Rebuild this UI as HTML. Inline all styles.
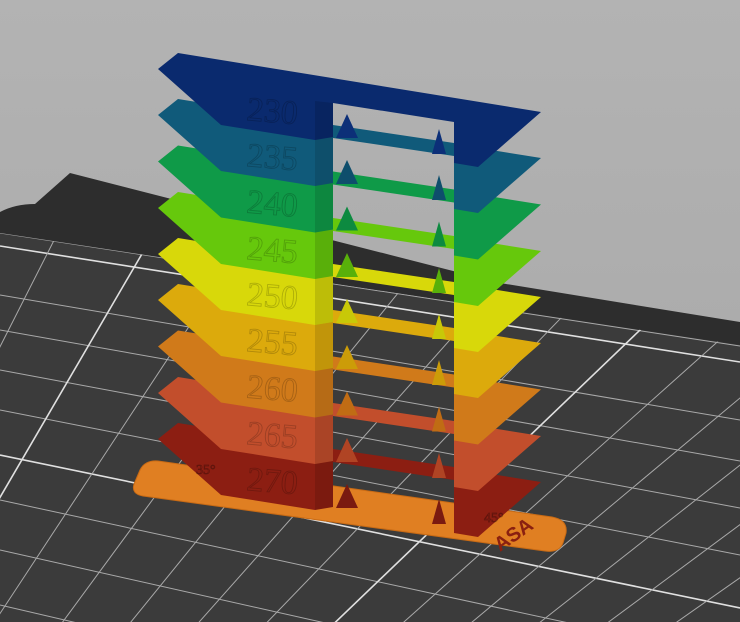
<!DOCTYPE html>
<html><head><meta charset="utf-8"><style>
html,body{margin:0;padding:0;width:740px;height:622px;overflow:hidden;background:#ababab}
svg{display:block;overflow:hidden}
.n{font-family:"Liberation Serif",serif;font-size:34px;fill:none;stroke:rgba(0,0,0,.2);stroke-width:.9}
</style></head><body>
<svg width="740" height="622" viewBox="0 0 740 622" xmlns="http://www.w3.org/2000/svg">
<defs>
<linearGradient id="bg" x1="0" y1="0" x2="0" y2="1"><stop offset="0" stop-color="#b3b3b3"/><stop offset="1" stop-color="#a6a6a6"/></linearGradient>
<clipPath id="gc"><polygon points="0,233 740,345 740,622 0,622"/></clipPath>
<clipPath id="all"><rect width="740" height="622"/></clipPath>
</defs>
<g clip-path="url(#all)">
<rect width="740" height="622" fill="url(#bg)"/>
<path d="M0,212 Q15,204 35,204 L70,173 L500,283 L740,322 L740,622 L0,622 Z" fill="#2d2d2d"/>
<polygon points="0,233 740,345 740,622 0,622" fill="#3b3b3b"/>
<g clip-path="url(#gc)" stroke="#a9a9a9" stroke-width="1" fill="none">
<line x1="0" y1="233" x2="740" y2="346"/>
<line x1="0" y1="246" x2="740" y2="362" stroke="#e0e0e0" stroke-width="1.6"/>
<line x1="0" y1="295" x2="740" y2="420"/>
<line x1="0" y1="330" x2="740" y2="461"/>
<line x1="0" y1="370" x2="740" y2="508"/>
<line x1="0" y1="410" x2="740" y2="555"/>
<line x1="0" y1="455" x2="740" y2="608" stroke="#e0e0e0" stroke-width="1.6"/>
<line x1="0" y1="500" x2="740" y2="660"/>
<line x1="0" y1="550" x2="740" y2="716"/>
<line x1="0" y1="605" x2="740" y2="777"/>
<line x1="-591" y1="1511" x2="67" y2="0"/>
<line x1="-591" y1="1511" x2="176" y2="0"/>
<line x1="-591" y1="1511" x2="290" y2="0" stroke="#e0e0e0" stroke-width="1.6"/>
<line x1="-591" y1="1511" x2="404" y2="0"/>
<line x1="-591" y1="1511" x2="520" y2="0"/>
<line x1="-591" y1="1511" x2="636" y2="0"/>
<line x1="-591" y1="1511" x2="752" y2="0"/>
<line x1="-591" y1="1511" x2="868" y2="0"/>
<line x1="-591" y1="1511" x2="984" y2="0" stroke="#e0e0e0" stroke-width="1.6"/>
<line x1="-591" y1="1511" x2="1100" y2="0"/>
<line x1="-591" y1="1511" x2="1216" y2="0"/>
<line x1="-591" y1="1511" x2="1332" y2="0"/>
<line x1="-591" y1="1511" x2="1448" y2="0"/>
<line x1="-591" y1="1511" x2="1564" y2="0"/>
<line x1="-591" y1="1511" x2="1680" y2="0" stroke="#e0e0e0" stroke-width="1.6"/>
<line x1="-591" y1="1511" x2="1796" y2="0"/>
</g>
<path d="M158,461 L552,517 Q568,520 566,533 L563,543 Q559,553 545,551 L143,496 Q131,494 134,484 L140,470 Q145,460 158,461 Z" fill="#e07f22" stroke="#c86a14" stroke-width="1"/>
<text x="0" y="0" transform="translate(500,552) rotate(-35)" font-family="Liberation Sans,sans-serif" font-weight="bold" font-size="20" fill="#8a2010">ASA</text>

<g transform="translate(0,370)" fill="#8c1e12">
<polygon points="333,79 454,97 454,110 333,92"/>
<polygon points="158,69 178,53 333,78 333,137 315,140 221,125"/>
<polygon points="315,76 333,78 333,137 315,140" fill="#000" opacity=".12"/>
<polygon points="454,98 541,112 478,167 454,163"/>
<text class="n" x="247" y="122" transform="rotate(5 270 110)">270</text>
<text x="196" y="104" font-family="Liberation Serif,serif" font-size="14" fill="none" stroke="rgba(0,0,0,.3)" stroke-width=".7">35°</text>
<text x="484" y="152" font-family="Liberation Serif,serif" font-size="14" fill="none" stroke="rgba(0,0,0,.3)" stroke-width=".7">45°</text>
<polygon points="347,114 336,138 358,138" fill="#7a1a10"/>
<polygon points="439,129 432,154 446,154" fill="#7a1a10"/>
</g>
<g transform="translate(0,324)" fill="#c24e2c">
<polygon points="333,79 454,97 454,110 333,92"/>
<polygon points="158,69 178,53 333,78 333,137 315,140 221,125"/>
<polygon points="315,76 333,78 333,137 315,140" fill="#000" opacity=".12"/>
<polygon points="454,98 541,112 478,167 454,163"/>
<text class="n" x="247" y="122" transform="rotate(5 270 110)">265</text>
<polygon points="347,114 336,138 358,138" fill="#b04424"/>
<polygon points="439,129 432,154 446,154" fill="#b04424"/>
</g>
<g transform="translate(0,277.5)" fill="#d07a1a">
<polygon points="333,79 454,97 454,110 333,92"/>
<polygon points="158,69 178,53 333,78 333,137 315,140 221,125"/>
<polygon points="315,76 333,78 333,137 315,140" fill="#000" opacity=".12"/>
<polygon points="454,98 541,112 478,167 454,163"/>
<text class="n" x="247" y="122" transform="rotate(5 270 110)">260</text>
<polygon points="347,114 336,138 358,138" fill="#c06c14"/>
<polygon points="439,129 432,154 446,154" fill="#c06c14"/>
</g>
<g transform="translate(0,231)" fill="#dcaa0c">
<polygon points="333,79 454,97 454,110 333,92"/>
<polygon points="158,69 178,53 333,78 333,137 315,140 221,125"/>
<polygon points="315,76 333,78 333,137 315,140" fill="#000" opacity=".12"/>
<polygon points="454,98 541,112 478,167 454,163"/>
<text class="n" x="247" y="122" transform="rotate(5 270 110)">255</text>
<polygon points="347,114 336,138 358,138" fill="#cc9c08"/>
<polygon points="439,129 432,154 446,154" fill="#cc9c08"/>
</g>
<g transform="translate(0,185)" fill="#d8d80a">
<polygon points="333,79 454,97 454,110 333,92"/>
<polygon points="158,69 178,53 333,78 333,137 315,140 221,125"/>
<polygon points="315,76 333,78 333,137 315,140" fill="#000" opacity=".12"/>
<polygon points="454,98 541,112 478,167 454,163"/>
<text class="n" x="247" y="122" transform="rotate(5 270 110)">250</text>
<polygon points="347,114 336,138 358,138" fill="#c8c808"/>
<polygon points="439,129 432,154 446,154" fill="#c8c808"/>
</g>
<g transform="translate(0,139)" fill="#66c80c">
<polygon points="333,79 454,97 454,110 333,92"/>
<polygon points="158,69 178,53 333,78 333,137 315,140 221,125"/>
<polygon points="315,76 333,78 333,137 315,140" fill="#000" opacity=".12"/>
<polygon points="454,98 541,112 478,167 454,163"/>
<text class="n" x="247" y="122" transform="rotate(5 270 110)">245</text>
<polygon points="347,114 336,138 358,138" fill="#58b00a"/>
<polygon points="439,129 432,154 446,154" fill="#58b00a"/>
</g>
<g transform="translate(0,92.5)" fill="#0f9a48">
<polygon points="333,79 454,97 454,110 333,92"/>
<polygon points="158,69 178,53 333,78 333,137 315,140 221,125"/>
<polygon points="315,76 333,78 333,137 315,140" fill="#000" opacity=".12"/>
<polygon points="454,98 541,112 478,167 454,163"/>
<text class="n" x="247" y="122" transform="rotate(5 270 110)">240</text>
<polygon points="347,114 336,138 358,138" fill="#0d8a40"/>
<polygon points="439,129 432,154 446,154" fill="#0d8a40"/>
</g>
<g transform="translate(0,46)" fill="#105a7a">
<polygon points="333,79 454,97 454,110 333,92"/>
<polygon points="158,69 178,53 333,78 333,137 315,140 221,125"/>
<polygon points="315,76 333,78 333,137 315,140" fill="#000" opacity=".12"/>
<polygon points="454,98 541,112 478,167 454,163"/>
<text class="n" x="247" y="122" transform="rotate(5 270 110)">235</text>
<polygon points="347,114 336,138 358,138" fill="#0e4e6c"/>
<polygon points="439,129 432,154 446,154" fill="#0e4e6c"/>
</g>
<g fill="#0a2a6e">
<polygon points="158,69 178,53 541,112 478,167 454,163 454,122 333,103 333,137 315,140 221,125"/>
<polygon points="315,101 333,103 333,137 315,140" fill="#000" opacity=".12"/>
<text class="n" x="247" y="122" transform="rotate(5 270 110)">230</text>
<polygon points="347,114 336,138 358,138" fill="#0c2f78"/>
<polygon points="439,129 432,154 446,154" fill="#0c2f78"/>
</g>
</g>
</svg>
</body></html>
